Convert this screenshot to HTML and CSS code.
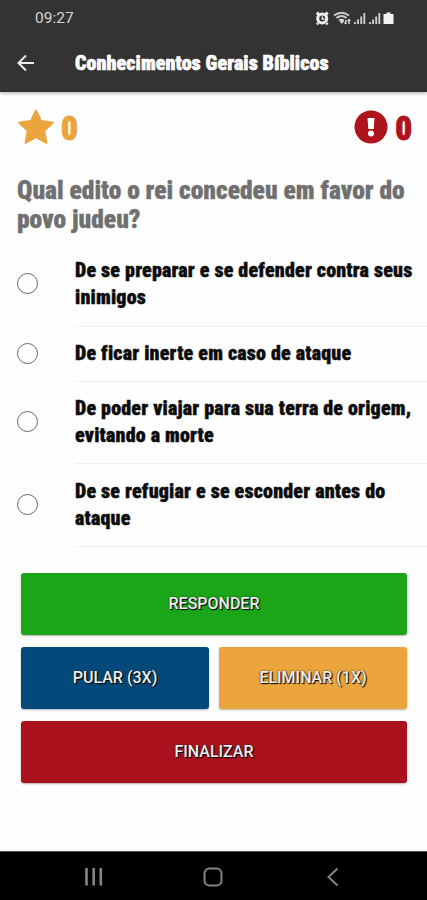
FILE: index.html
```
<!DOCTYPE html>
<html lang="pt-BR">
<head>
  <meta charset="UTF-8" />
  <meta name="viewport" content="width=device-width, initial-scale=1.0"/>
  <title>Conhecimentos Gerais Bíblicos</title>
  <link rel="stylesheet" href="styles.css">
</head>
<body>

  <header class="header">
    <div class="status-bar">
      <span class="clock">09:27</span>
      <svg class="status-icons" width="82" height="16" viewBox="0 0 82 16">
        <!-- alarm -->
        <path d="M2.5 4.5L5 2.5M11.5 2.5L14 4.5M4 13L3 14.5M12.5 13L13.5 14.5" stroke="#eee" stroke-width="2.4"/>
        <circle cx="8.2" cy="8.6" r="4.5" fill="none" stroke="#eee" stroke-width="3"/>
        <path d="M8.2 6.2V9H10.5" fill="none" stroke="#eee" stroke-width="1.3"/>
        <!-- wifi -->
        <path d="M20 5.5Q27.5 0 35 5.5M22.5 8Q27.5 4 32.5 8M25 10.5Q27.5 8.8 30 10.5" fill="none" stroke="#ccc" stroke-width="2"/>
        <path d="M27.5 9L30 11.5L27.5 14L26 11.5Z" fill="#ddd"/>
        <path d="M32 10V14M30.5 12.5L32 14M35 14V9.5M33.8 11L35 9.5L36.3 11" fill="none" stroke="#ddd" stroke-width="1.4"/>
        <!-- signal -->
        <path d="M41 12V14M44 9.5V14M47.2 6.5V14M50.3 3V14M56 12V14M59 9.5V14M62.2 6.5V14M65.3 3V14" stroke="#ccc" stroke-width="1.9"/>
        <!-- battery -->
        <path d="M72.5 2.5H76.5V4H79.5V14H69.5V4H72.5Z" fill="#f2f2f2"/>
      </svg>
    </div>
    <div class="toolbar">
      <svg class="back" width="18" height="18" viewBox="0 0 18 18">
        <path d="M17 9H2M9 1.5L1.5 9L9 16.5" fill="none" stroke="#eee" stroke-width="2"/>
      </svg>
      <h1>Conhecimentos Gerais Bíblicos</h1>
    </div>
  </header>

  <main class="content">
    <div class="score">
      <div class="score-item hits">
        <svg width="36" height="36" viewBox="0 0 36 36">
          <path d="M18 1.5L23.2 12L35 13.6L26.4 21.7L28.5 34L18 28.3L7.5 34L9.6 21.7L1 13.6L12.8 12Z" fill="#eba53c" stroke="#eba53c" stroke-width="1.8" stroke-linejoin="round"/>
        </svg>
        <span>0</span>
      </div>
      <div class="score-item misses">
        <svg width="34" height="34" viewBox="0 0 34 34">
          <circle cx="17" cy="17" r="16.5" fill="#ae131e"/>
          <path d="M13.5 8H20.5L19.7 19H14.3Z" fill="#fff"/>
          <circle cx="17" cy="23.5" r="3" fill="#fff"/>
        </svg>
        <span>0</span>
      </div>
    </div>

    <h2>Qual edito o rei concedeu em favor do povo judeu?</h2>

    <form class="options">
      <label class="option">
        <input type="radio" name="answer">
        <span class="label">De se preparar e se defender contra seus inimigos</span>
      </label>
      <label class="option">
        <input type="radio" name="answer">
        <span class="label">De ficar inerte em caso de ataque</span>
      </label>
      <label class="option">
        <input type="radio" name="answer">
        <span class="label">De poder viajar para sua terra de origem, evitando a morte</span>
      </label>
      <label class="option">
        <input type="radio" name="answer">
        <span class="label">De se refugiar e se esconder antes do ataque</span>
      </label>
    </form>

    <div class="actions">
      <button class="btn green">RESPONDER</button>
      <button class="btn blue half">PULAR (3X)</button>
      <button class="btn orange half">ELIMINAR (1X)</button>
      <button class="btn red">FINALIZAR</button>
    </div>
  </main>

  <nav class="navbar">
    <svg width="20" height="20" viewBox="0 0 20 20">
      <path d="M2.5 1V18.5M9.7 1V18.5M16.8 1V18.5" stroke="#858585" stroke-width="2.6"/>
    </svg>
    <svg width="20" height="20" viewBox="0 0 20 20">
      <rect x="1.5" y="1.5" width="17" height="17" rx="5" fill="none" stroke="#858585" stroke-width="2"/>
    </svg>
    <svg width="20" height="20" viewBox="0 0 20 20">
      <path d="M15.5 1.5L6.5 10L15.5 18.5" fill="none" stroke="#858585" stroke-width="2"/>
    </svg>
  </nav>

</body>
</html>
```

FILE: styles.css
```
* {
  box-sizing: border-box;
}

body {
  margin: 0;
  height: 900px;
  display: flex;
  flex-direction: column;
  background: #fefefe;
  font-family: Roboto, sans-serif;
  overflow: hidden;
}

h1, h2, .label, .score-item {
  font-family: Roboto, "Open Sans", sans-serif;
  font-stretch: 75%;
  font-weight: 900;
  margin: 0;
}

.header {
  height: 92px;
  background: #333;
  color: #fff;
  box-shadow: 0 1px 4px rgba(0,0,0,0.35);
}

.status-bar {
  height: 35px;
  padding: 0 31px 0 35px;
  display: flex;
  align-items: center;
  justify-content: space-between;
}

.clock {
  font-size: 15.5px;
  color: #d5d5d5;
}

.toolbar {
  height: 56px;
  padding-left: 17px;
  display: flex;
  align-items: center;
  gap: 40px;
}

h1 {
  font-size: 20px;
  letter-spacing: 0.1px;
  white-space: nowrap;
  -webkit-text-stroke: 0.6px #fff;
}

.content {
  flex: 1;
}

.score {
  display: flex;
  justify-content: space-between;
  padding: 17px 15px 0 18px;
  height: 83px;
}

.score-item {
  display: flex;
  align-items: center;
  height: 36px;
  gap: 7px;
  font-size: 33px;
  -webkit-text-stroke: 1px;
}

.score-item span {
  padding-top: 2px;
}

.hits {
  color: #eba53c;
}

.misses {
  color: #ae131e;
}

h2 {
  padding: 1px 12px 0 17px;
  height: 69px;
  font-size: 25.5px;
  line-height: 28.5px;
  color: #707070;
  -webkit-text-stroke: 0.3px;
}

.options {
  margin-top: -2px;
}

.option {
  display: flex;
  align-items: center;
  height: 82px;
  padding-left: 17px;
}

.option:nth-child(1) {
  height: 85px;
}

.option:nth-child(2) {
  height: 55px;
}

.option:nth-child(4) {
  height: 83px;
}

.option input {
  appearance: none;
  flex: none;
  width: 21px;
  height: 21px;
  margin: 0 37px 3px 0;
  border: 1.5px solid #666;
  border-radius: 50%;
}

.label {
  flex: 1;
  height: 100%;
  display: flex;
  align-items: center;
  padding-bottom: 1px;
  font-size: 20px;
  line-height: 27px;
  letter-spacing: 0.2px;
  color: #0c0c0c;
  border-bottom: 1px solid #f0f0f0;
  -webkit-text-stroke: 0.4px;
}

.actions {
  display: grid;
  grid-template-columns: 188px 188px;
  justify-content: space-between;
  gap: 12px 0;
  padding: 26px 20px 0 21px;
}

.btn {
  grid-column: span 2;
  height: 62px;
  border: none;
  border-radius: 3px;
  padding: 0 0 2px;
  font-family: Roboto, sans-serif;
  font-size: 16px;
  font-weight: 500;
  color: #eee;
  text-shadow: 1px 1px 1px #000, 0 0 2px #222;
  box-shadow: 0 1px 2px rgba(0,0,0,0.3);
}

.half {
  grid-column: span 1;
}

.green {
  background: #1ba61a;
}

.blue {
  background: #034a7b;
}

.orange {
  background: #eba53c;
}

.red {
  background: #ab121d;
}

.navbar {
  height: 49px;
  background: #000;
  border-top: 1px solid #555;
  display: flex;
  align-items: center;
  justify-content: space-between;
  padding: 2px 85px 0 84px;
}
```
